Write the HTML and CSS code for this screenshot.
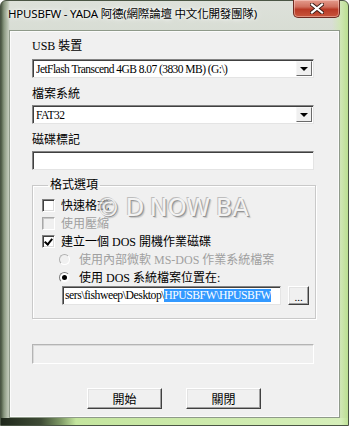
FILE: index.html
```html
<!DOCTYPE html>
<html lang="zh-Hant">
<head>
  <meta charset="UTF-8">
  <title>HPUSBFW</title>
<link rel="stylesheet" href="styles.css">
</head>
<body>
<div class="window">
  <div class="titlebar">
    <span class="title">HPUSBFW - YADA 阿德(網際論壇 中文化開發團隊)</span>
    <span class="close">
      <svg width="14" height="11" viewBox="0 0 14 11"><path d="M2 1.5 L12 9.5 M12 1.5 L2 9.5" stroke="#3a1a14" stroke-width="4" stroke-linecap="square"/><path d="M2 1.5 L12 9.5 M12 1.5 L2 9.5" stroke="#fff" stroke-width="2.2" stroke-linecap="square"/></svg>
    </span>
  </div>
  <div class="client">
    <div class="label">USB 裝置</div>
    <div class="combo">
      <span class="value">JetFlash Transcend 4GB 8.07 (3830 MB) (G:\)</span>
      <span class="drop"></span>
    </div>
    <div class="label">檔案系統</div>
    <div class="combo">
      <span class="value">FAT32</span>
      <span class="drop"></span>
    </div>
    <div class="label">磁碟標記</div>
    <div class="textbox"></div>

    <fieldset class="group">
      <legend>格式選項</legend>
      <div class="row"><span class="check"></span>快速格式</div>
      <div class="row off"><span class="check"></span>使用壓縮</div>
      <div class="row"><span class="check on"></span>建立一個 DOS 開機作業磁碟</div>
      <div class="row sub off"><span class="radio"></span>使用內部微軟 MS-DOS 作業系統檔案</div>
      <div class="row sub"><span class="radio on"></span>使用 DOS 系統檔案位置在:</div>
      <div class="pathrow">
        <div class="path">sers\fishweep\Desktop\<span class="sel">HPUSBFW\HPUSBFW</span></div>
        <div class="btn browse">...</div>
      </div>
      <div class="watermark">© D NOW BA</div>
    </fieldset>

    <div class="progress"></div>
    <div class="buttons">
      <div class="btn action">開始</div>
      <div class="btn action">關閉</div>
    </div>
  </div>
</div>
</body>
</html>
```

FILE: styles.css
```css
*{margin:0;padding:0;box-sizing:border-box}
body{width:349px;height:426px;overflow:hidden;background:#fff;font:12px "Liberation Serif","Noto Sans CJK TC",serif;color:#000}

.window{width:349px;height:426px;display:flex;flex-direction:column;padding:0 8px 7px 8px;border:1px solid #4a5544;border-radius:6px 6px 0 0;
  background:
    linear-gradient(to right,#1f281b 0,#3f4c36 40px,#7f9a66 60px,#c4e59e 75px,#d6efba 340px,#b8de8c 349px) left bottom/100% 7px no-repeat,
    linear-gradient(to right,#4b5843 0,#8a9880 3px,#bcc5b4 7px,rgba(223,227,220,0) 9px,rgba(223,227,220,0) 331px,#cfe6b3 340px,#b8de8c 348px),
    linear-gradient(to bottom,#dde1da 0,#d8ddd4 30px,#c5cdbe 400px,#aebd9e 426px);}
.titlebar{height:29px;flex:none;display:flex;align-items:flex-start;margin-left:-1px}
.title{font:11.5px "Noto Sans","Noto Sans CJK TC",sans-serif;line-height:14px;margin-top:6px;white-space:nowrap;letter-spacing:-0.2px;text-shadow:0 0 6px #fff,0 0 3px #fff}
.close{margin-left:auto;width:47px;height:18px;margin-top:-1px;display:flex;align-items:center;justify-content:center;border:1px solid #6e2b22;border-top:none;border-radius:0 0 5px 5px;
  background:linear-gradient(to bottom,#e49b8d 0,#d0705e 40%,#b93a26 55%,#c8553c 100%);box-shadow:inset 0 0 0 1px rgba(255,220,210,.45)}

.client{flex:1;background:#f0f0f0;border:1px solid #8f9a8a;box-shadow:inset 0 0 0 1px #fbfbfb;padding:7px 25px 0 22px;display:flex;flex-direction:column}

.label{height:16px;line-height:16px;margin-bottom:5px;white-space:nowrap}
.combo{height:19px;display:flex;align-items:center;background:#fff;border:1px solid;border-color:#838383 #e4e4e4 #e4e4e4 #838383;box-shadow:inset 1px 1px 0 #404040;padding:0 1px 0 3px;margin-bottom:8px}
.combo + .label{margin-bottom:3px}
.value{flex:1;white-space:nowrap;overflow:hidden;line-height:16px;padding-top:1px;font-size:11.5px;letter-spacing:-0.55px}
.drop{width:16px;height:15px;background:#f0f0f0;border:1px solid;border-color:#f6f6f6 #6b6b6b #6b6b6b #f6f6f6;position:relative}
.drop::after{content:"";position:absolute;left:3px;top:5px;border-left:4px solid transparent;border-right:4px solid transparent;border-top:4px solid #000}
.textbox{height:19px;background:#fff;border:1px solid;border-color:#838383 #e4e4e4 #e4e4e4 #838383;box-shadow:inset 1px 1px 0 #404040;margin-bottom:7px}

.group{position:relative;border:1px solid #c9c9c9;box-shadow:inset 1px 1px 0 #fff,1px 1px 0 #fff;padding:3px 6px 13px 9px;margin-bottom:25px}
.group legend{padding:0 2px 0 2px;margin-left:6px;line-height:16px;font-size:12px}
.row{height:18px;display:flex;align-items:center;gap:6px;white-space:nowrap}
.row.sub{padding-left:17px;gap:9px}
.row.off{color:#a0a0a0}
.check{width:13px;height:13px;flex:none;background:#fff;border:1px solid;border-color:#808080 #fff #fff #808080;box-shadow:inset 1px 1px 0 #404040,inset -1px -1px 0 #dcdcdc;position:relative}
.row.off .check{background:#f0f0f0;border-color:#a8a8a8 #fff #fff #a8a8a8;box-shadow:inset 1px 1px 0 #c8c8c8}
.check.on::after{content:"";position:absolute;left:3px;top:1px;width:3px;height:6px;border:solid #000;border-width:0 2px 2px 0;transform:rotate(40deg)}
.radio{width:11px;height:11px;flex:none;border-radius:50%;background:#fff;border:1px solid;border-color:#808080 #f4f4f4 #f4f4f4 #808080;position:relative}
.row.off .radio{background:#f0f0f0;border-color:#b0b0b0 #fff #fff #b0b0b0}
.radio.on::after{content:"";position:absolute;left:2px;top:2px;width:5px;height:5px;border-radius:50%;background:#000}
.pathrow{display:flex;align-items:center;gap:7px;padding-left:20px}
.path{width:219px;height:19px;background:#fff;border:1px solid;border-color:#838383 #e4e4e4 #e4e4e4 #838383;box-shadow:inset 1px 1px 0 #404040;white-space:nowrap;overflow:hidden;line-height:16px;padding-left:2px;padding-top:1px;font-size:11.7px;letter-spacing:-0.45px}
.sel{background:#3399ff;color:#fff}
.btn{background:#f0f0f0;border:1px solid;border-color:#fff #404040 #404040 #fff;box-shadow:inset -1px -1px 0 #a0a0a0,inset 1px 1px 0 #e3e3e3;display:flex;align-items:center;justify-content:center}
.browse{width:21px;height:19px;line-height:10px;font-size:11px;padding-top:2px}
.watermark{position:absolute;left:63px;top:1px;font:24px "DejaVu Sans",sans-serif;letter-spacing:0;word-spacing:-2px;color:#f4f4f4;opacity:.9;
  text-shadow:-1px -1px 0 #b8b8b8,1px 1px 0 #8c8c8c,2px 2px 1px #c4c4c4;pointer-events:none;white-space:nowrap}

.progress{height:20px;border:1px solid;border-color:#b4b4b4 #ffffff #ffffff #b4b4b4;box-shadow:inset 1px 1px 0 #dadada;background:#f0f0f0;margin-bottom:24px}
.buttons{display:flex;justify-content:center;gap:24px;padding-left:2px}
.action{width:75px;height:21px;font-family:"Noto Sans CJK TC",sans-serif;font-size:12px}
```
